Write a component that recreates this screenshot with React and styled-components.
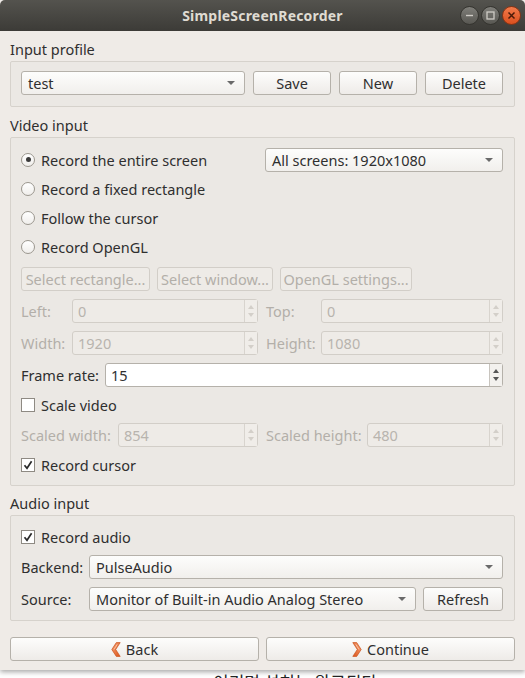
import React from "react";
import styled, { createGlobalStyle, css } from "styled-components";

const GlobalStyle = createGlobalStyle`
  html, body {
    margin: 0;
    padding: 0;
    background: #ffffff;
    overflow: hidden;
  }
  body {
    font-family: "Noto Sans", "Open Sans", sans-serif;
    font-size: 14.5px;
    color: #2f2f2f;
  }
`;

const Window = styled.div`
  width: 525px;
  height: 670px;
  background: #efebe7;
  display: flex;
  flex-direction: column;
  box-shadow: 0 2px 5px rgba(0, 0, 0, 0.35);
`;

const TitleBar = styled.div`
  height: 31px;
  flex: none;
  display: grid;
  grid-template-columns: 1fr auto 1fr;
  align-items: center;
  background: linear-gradient(#54534e, #3c3b37);
  border-radius: 5px 5px 0 0;
  color: #dfdbd2;
  font-weight: bold;
  font-size: 14px;
  letter-spacing: 0.2px;
`;

const TitleText = styled.div`
  grid-column: 2;
`;

const Controls = styled.div`
  grid-column: 3;
  justify-self: end;
  display: flex;
  gap: 2px;
  padding-right: 4px;
`;

const CtrlButton = styled.div`
  width: 17px;
  height: 17px;
  border-radius: 50%;
  display: flex;
  align-items: center;
  justify-content: center;
  border: 1px solid #35342f;
  background: linear-gradient(#7f7e79, #585752);
  ${(p) =>
    p.$close &&
    css`
      border-color: #8a3414;
      background: linear-gradient(#f37a4a, #d9501f);
    `}
`;

const Body = styled.div`
  flex: 1;
  display: flex;
  flex-direction: column;
  padding: 2px 10px 0;
`;

const SectionLabel = styled.div`
  height: 20px;
  line-height: 20px;
  margin: ${(p) => p.$mt}px 0 2px;
  color: #2f2f2f;
`;

const Group = styled.div`
  border: 1px solid #d6d2cc;
  border-radius: 2px;
  background: #ebe8e4;
  padding: ${(p) => p.$pad || "9px 11px 11px 10px"};
  display: flex;
  flex-direction: column;
  gap: 8px;
`;

const Stack = styled.div`
  display: flex;
  flex-direction: column;
  gap: 4px;
`;

const Row = styled.div`
  display: flex;
  align-items: center;
  gap: ${(p) => (p.$gap != null ? p.$gap : 8)}px;
  height: ${(p) => p.$h || 24}px;
`;

const Button = styled.button`
  height: 24px;
  padding: 0 4px;
  font: inherit;
  color: #2f2f2f;
  border: 1px solid #b5b1aa;
  border-radius: 3px;
  background: linear-gradient(#fdfdfc, #eeebe8);
  display: flex;
  align-items: center;
  justify-content: center;
  gap: 5px;
  white-space: nowrap;
  flex: ${(p) => (p.$grow ? 1 : "none")};
  ${(p) => p.$width && css`width: ${p.$width}px;`}
  ${(p) => p.$ml && css`margin-left: ${p.$ml}px;`}
  ${(p) =>
    p.disabled &&
    css`
      color: #b3afa9;
      border-color: #d2cec8;
      background: #eeebe7;
    `}
`;

const Combo = styled.div`
  height: 24px;
  box-sizing: border-box;
  border: 1px solid #b5b1aa;
  border-radius: 3px;
  background: linear-gradient(#fdfdfc, #f1efec);
  display: flex;
  align-items: center;
  padding: 0 9px 0 6px;
  flex: ${(p) => (p.$width ? "none" : 1)};
  ${(p) => p.$width && css`width: ${p.$width}px;`}
`;

const ComboText = styled.span`
  flex: 1;
  white-space: nowrap;
`;

const Caret = styled.span`
  width: 0;
  height: 0;
  border-left: 4px solid transparent;
  border-right: 4px solid transparent;
  border-top: 4px solid #6a6a6a;
`;

const Label = styled.span`
  flex: none;
  white-space: nowrap;
  color: ${(p) => (p.$disabled ? "#b3afa9" : "#2f2f2f")};
  ${(p) => p.$width && css`width: ${p.$width}px;`}
`;

const Pair = styled.div`
  flex: 1;
  display: flex;
  align-items: center;
  height: 24px;
`;

const Spin = styled.div`
  flex: 1;
  height: 24px;
  box-sizing: border-box;
  display: flex;
  border: 1px solid ${(p) => (p.$disabled ? "#d2cec8" : "#b5b1aa")};
  border-radius: 3px;
  background: ${(p) => (p.$disabled ? "#eeebe7" : "#ffffff")};
  color: ${(p) => (p.$disabled ? "#b8b4ae" : "#2f2f2f")};
`;

const SpinValue = styled.div`
  flex: 1;
  display: flex;
  align-items: center;
  padding-left: 5px;
`;

const SpinArrows = styled.div`
  width: 12px;
  border-left: 1px solid ${(p) => (p.$disabled ? "#d8d4ce" : "#c8c4be")};
  display: flex;
  flex-direction: column;
  align-items: center;
  justify-content: center;
  gap: 4px;
  background: ${(p) => (p.$disabled ? "#f0ede9" : "#f3f1ee")};
`;

const Tri = styled.span`
  width: 0;
  height: 0;
  border-left: 3.5px solid transparent;
  border-right: 3.5px solid transparent;
  ${(p) =>
    p.$up
      ? css`border-bottom: 4px solid ${p.$disabled ? "#d3cfc9" : "#555"};`
      : css`border-top: 4px solid ${p.$disabled ? "#d3cfc9" : "#555"};`}
`;

const Choice = styled.label`
  flex: 1;
  display: flex;
  align-items: center;
  gap: 6px;
  height: ${(p) => p.$h || 25}px;
  white-space: nowrap;
`;

const RadioDot = styled.span`
  width: 14px;
  height: 14px;
  box-sizing: border-box;
  border-radius: 50%;
  border: 1px solid #9b978f;
  background: linear-gradient(#ffffff, #f0eeeb);
  display: flex;
  align-items: center;
  justify-content: center;
  &::after {
    content: "";
    width: 5px;
    height: 5px;
    border-radius: 50%;
    background: ${(p) => (p.$on ? "#3a3a3a" : "transparent")};
  }
`;

const CheckBox = styled.span`
  width: 14px;
  height: 14px;
  box-sizing: border-box;
  border: 1px solid #8e8a83;
  background: #ffffff;
  display: flex;
  align-items: center;
  justify-content: center;
`;

const Footer = styled.div`
  display: flex;
  gap: 7px;
  margin-top: 16px;
`;

const Below = styled.div`
  height: 8px;
  overflow: hidden;
  padding-left: 213px;
  font-family: "Noto Sans CJK KR", "Noto Sans", sans-serif;
  font-size: 17px;
  line-height: 20px;
  color: #222;
`;

const BelowText = styled.div`
  margin-top: 2px;
`;

function SpinBox({ value, disabled }) {
  return (
    <Spin $disabled={disabled}>
      <SpinValue>{value}</SpinValue>
      <SpinArrows $disabled={disabled}>
        <Tri $up $disabled={disabled} />
        <Tri $disabled={disabled} />
      </SpinArrows>
    </Spin>
  );
}

function Radio({ on, children }) {
  return (
    <Choice>
      <RadioDot $on={on} />
      {children}
    </Choice>
  );
}

function Check({ on, children }) {
  return (
    <Choice $h={20}>
      <CheckBox>
        {on && (
          <svg width="10" height="10" viewBox="0 0 10 10">
            <path d="M1.5 5.2 L4 8.3 L8.6 1.2" fill="none" stroke="#2a2a2a" strokeWidth="1.7" />
          </svg>
        )}
      </CheckBox>
      {children}
    </Choice>
  );
}

function Chevron({ back }) {
  const id = back ? "chb" : "chf";
  return (
    <svg width="10" height="15" viewBox="0 0 10 15" style={{ transform: back ? "none" : "scaleX(-1)" }}>
      <defs>
        <linearGradient id={id} x1="0" y1="0" x2="1" y2="1">
          <stop offset="0" stopColor="#f7a276" />
          <stop offset="1" stopColor="#dc5419" />
        </linearGradient>
      </defs>
      <path
        d="M0.8 7.5 L5.3 0.6 L9.2 0.6 L4.7 7.5 L9.2 14.4 L5.3 14.4 Z"
        fill={`url(#${id})`}
        stroke="#c9521d"
        strokeWidth="0.7"
        strokeLinejoin="round"
      />
      <path d="M3 7.5 L6.2 2.4" stroke="#fbd2b8" strokeWidth="0.8" fill="none" />
    </svg>
  );
}

export default function App() {
  return (
    <>
      <GlobalStyle />
      <Window>
        <TitleBar>
          <TitleText>SimpleScreenRecorder</TitleText>
          <Controls>
            <CtrlButton>
              <svg width="9" height="9" viewBox="0 0 9 9">
                <path d="M1 4.5 H8" stroke="#cfccc6" strokeWidth="1.4" />
              </svg>
            </CtrlButton>
            <CtrlButton>
              <svg width="9" height="9" viewBox="0 0 9 9">
                <rect x="1" y="1" width="7" height="7" fill="none" stroke="#cfccc6" strokeWidth="1.3" />
              </svg>
            </CtrlButton>
            <CtrlButton $close>
              <svg width="9" height="9" viewBox="0 0 9 9">
                <path d="M1.5 1.5 L7.5 7.5 M7.5 1.5 L1.5 7.5" stroke="#4a1a08" strokeWidth="1.5" />
              </svg>
            </CtrlButton>
          </Controls>
        </TitleBar>

        <Body>
          <SectionLabel $mt={6}>Input profile</SectionLabel>
          <Group>
            <Row>
              <Combo>
                <ComboText>test</ComboText>
                <Caret />
              </Combo>
              <Button $width={78}>Save</Button>
              <Button $width={78}>New</Button>
              <Button $width={78}>Delete</Button>
            </Row>
          </Group>

          <SectionLabel $mt={8}>Video input</SectionLabel>
          <Group $pad="9px 11px 10px 10px">
            <Stack>
              <Row $h={25}>
                <Radio on>Record the entire screen</Radio>
                <Combo $width={238}>
                  <ComboText>All screens: 1920x1080</ComboText>
                  <Caret />
                </Combo>
              </Row>
              <Row $h={25}>
                <Radio>Record a fixed rectangle</Radio>
              </Row>
              <Row $h={25}>
                <Radio>Follow the cursor</Radio>
              </Row>
              <Row $h={25}>
                <Radio>Record OpenGL</Radio>
              </Row>
            </Stack>
            <Row $gap={7}>
              <Button disabled $width={129}>Select rectangle...</Button>
              <Button disabled $width={116}>Select window...</Button>
              <Button disabled $width={132}>OpenGL settings...</Button>
            </Row>
            <Row>
              <Pair>
                <Label $disabled $width={51}>Left:</Label>
                <SpinBox value="0" disabled />
              </Pair>
              <Pair>
                <Label $disabled $width={55}>Top:</Label>
                <SpinBox value="0" disabled />
              </Pair>
            </Row>
            <Row>
              <Pair>
                <Label $disabled $width={51}>Width:</Label>
                <SpinBox value="1920" disabled />
              </Pair>
              <Pair>
                <Label $disabled $width={55}>Height:</Label>
                <SpinBox value="1080" disabled />
              </Pair>
            </Row>
            <Row>
              <Pair>
                <Label $width={84}>Frame rate:</Label>
                <SpinBox value="15" />
              </Pair>
            </Row>
            <Row $h={20}>
              <Check>Scale video</Check>
            </Row>
            <Row>
              <Pair>
                <Label $disabled $width={97}>Scaled width:</Label>
                <SpinBox value="854" disabled />
              </Pair>
              <Pair>
                <Label $disabled $width={101}>Scaled height:</Label>
                <SpinBox value="480" disabled />
              </Pair>
            </Row>
            <Row $h={20}>
              <Check on>Record cursor</Check>
            </Row>
          </Group>

          <SectionLabel $mt={7}>Audio input</SectionLabel>
          <Group $pad="11px 11px 9px 10px">
            <Row $h={20}>
              <Check on>Record audio</Check>
            </Row>
            <Row $gap={0}>
              <Label $width={68}>Backend:</Label>
              <Combo>
                <ComboText>PulseAudio</ComboText>
                <Caret />
              </Combo>
            </Row>
            <Row $gap={0}>
              <Label $width={68}>Source:</Label>
              <Combo>
                <ComboText>Monitor of Built-in Audio Analog Stereo</ComboText>
                <Caret />
              </Combo>
              <Button $width={80} $ml={7}>Refresh</Button>
            </Row>
          </Group>

          <Footer>
            <Button $grow>
              <Chevron back />
              Back
            </Button>
            <Button $grow>
              <Chevron />
              Continue
            </Button>
          </Footer>
        </Body>
      </Window>
      <Below>
        <BelowText>이기면 설치는 완료된다</BelowText>
      </Below>
    </>
  );
}
